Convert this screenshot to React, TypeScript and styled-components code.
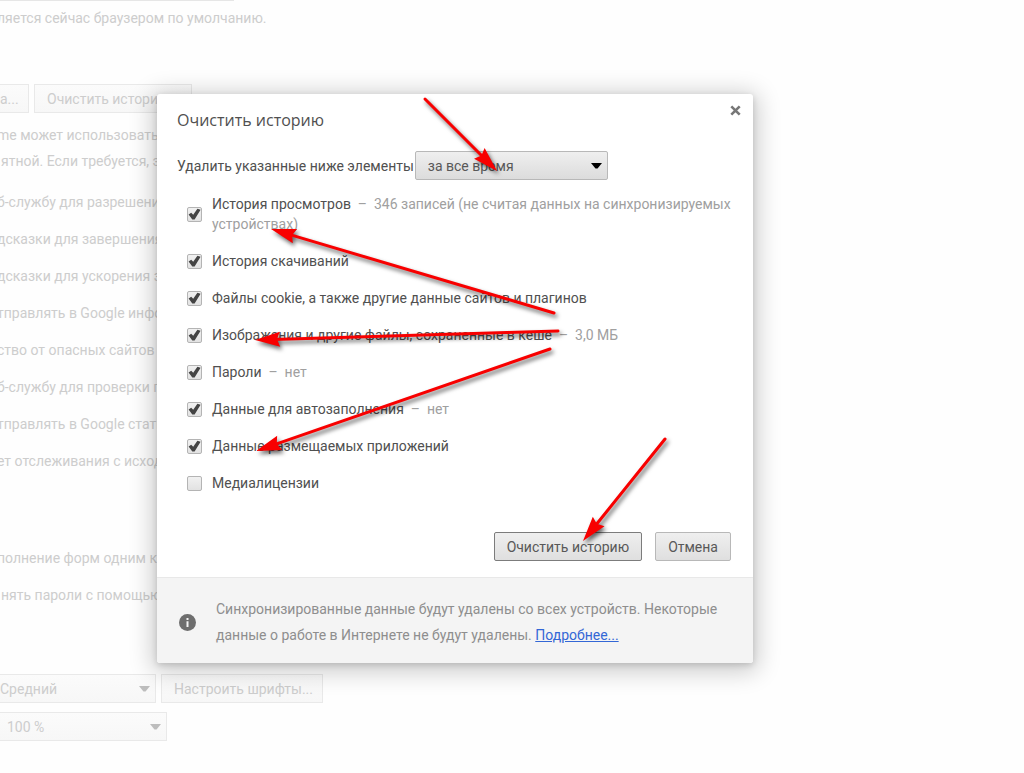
import React from "react";
import styled, { createGlobalStyle } from "styled-components";

const GlobalStyle = createGlobalStyle`
  *, *::before, *::after { box-sizing: border-box; }
  body {
    margin: 0;
    background: #fefefe;
    color: #505050;
    font-family: Roboto, "Noto Sans", sans-serif;
    font-size: 14px;
    line-height: 20px;
  }
  button, select, input { font: inherit; margin: 0; }
`;

const Page = styled.div`
  position: relative;
  min-height: 100vh;
  overflow: hidden;
`;

const Settings = styled.main`
  display: flex;
  flex-direction: column;
  color: #cdcdcd;
  white-space: nowrap;
`;

const Edge = styled.div`
  width: 234px;
  height: 1px;
  background: #e6e6e6;
`;

const Section = styled.section<{ $top: number; $gap: number }>`
  display: flex;
  flex-direction: column;
  gap: ${(p) => p.$gap}px;
  padding-top: ${(p) => p.$top}px;
`;

const Line = styled.p<{ $whole?: boolean }>`
  margin: 0 0 0 ${(p) => (p.$whole ? 1 : -3)}px;
`;

const Controls = styled.div`
  display: flex;
  gap: 5px;
`;

const FadedButton = styled.button<{ $w: number; $cut?: boolean }>`
  width: ${(p) => p.$w}px;
  height: 29px;
  padding: 0 12px 0 ${(p) => (p.$cut ? 0 : 12)}px;
  border: 1px solid #e9e9e9;
  border-left-width: ${(p) => (p.$cut ? 0 : 1)}px;
  background: linear-gradient(#fbfbfb, #f7f7f7);
  color: #cdcdcd;
  text-align: left;
`;

const SelectBox = styled.span<{ $w: number }>`
  display: inline-grid;
  align-items: center;
  width: ${(p) => p.$w}px;

  & > * { grid-area: 1 / 1; }
  & > svg { justify-self: end; margin-right: 6px; pointer-events: none; }
`;

const Select = styled.select<{ $faded?: boolean; $pad: number }>`
  appearance: none;
  width: 100%;
  height: 29px;
  padding: 0 20px 0 ${(p) => p.$pad}px;
  border: 1px solid ${(p) => (p.$faded ? "#e9e9e9" : "#b8b8b8")};
  border-left-width: ${(p) => (p.$faded ? 0 : 1)}px;
  border-radius: ${(p) => (p.$faded ? 0 : 2)}px;
  background: ${(p) => (p.$faded ? "linear-gradient(#fbfbfb, #f7f7f7)" : "linear-gradient(#efefef, #dcdcdc)")};
  color: ${(p) => (p.$faded ? "#cdcdcd" : "#585858")};
`;

const Overlay = styled.div`
  position: absolute;
  inset: 0;
  padding: 94px 20px 20px 157px;
`;

const Dialog = styled.div`
  position: relative;
  width: 100%;
  max-width: 596px;
  border-radius: 3px;
  background: #fff;
  box-shadow: 0 4px 23px 5px rgba(0, 0, 0, 0.2), 0 2px 6px rgba(0, 0, 0, 0.15);
`;

const Header = styled.header`
  display: flex;
  justify-content: space-between;
  align-items: flex-start;
  padding: 10px 11px 0 20px;
`;

const Title = styled.h1`
  margin: 4px 0 0;
  font-family: "Open Sans", "Noto Sans", sans-serif;
  font-size: 16px;
  line-height: 24px;
  font-weight: 400;
`;

const CloseButton = styled.button`
  display: flex;
  padding: 1px;
  border: 0;
  background: none;
`;

const Period = styled.div`
  display: flex;
  align-items: center;
  gap: 1px;
  padding: 19px 20px 0;

  label { white-space: nowrap; }
`;

const Options = styled.ul`
  display: flex;
  flex-direction: column;
  gap: 17px;
  margin: 0;
  padding: 14px 20px 0 30px;
  list-style: none;
`;

const Option = styled.label`
  display: flex;
  align-items: center;
  gap: 10px;
`;

const CheckBox = styled.span`
  display: grid;
  flex: none;
  place-items: center;

  & > * { grid-area: 1 / 1; }
  & > svg { pointer-events: none; }
`;

const CheckInput = styled.input`
  appearance: none;
  width: 15px;
  height: 15px;
  border: 1px solid #b4b4b4;
  border-radius: 2px;
  background: linear-gradient(#f1f1f1, #e2e2e2);
`;

const Muted = styled.span`
  color: #a0a0a0;
`;

const Actions = styled.div`
  display: flex;
  justify-content: flex-end;
  gap: 13px;
  padding: 39px 22px 16px;
`;

const ActionButton = styled.button<{ $primary?: boolean }>`
  height: 29px;
  padding: 0 12px;
  border: 1px solid ${(p) => (p.$primary ? "#7c7c7c" : "#b8b8b8")};
  border-radius: 2px;
  background: linear-gradient(#efefef, #dfdfdf);
  color: #585858;
`;

const Notice = styled.footer`
  display: flex;
  align-items: center;
  gap: 20px;
  padding: 18px 22px 15px;
  border-top: 1px solid #e8e8e8;
  border-radius: 0 0 3px 3px;
  background: #f4f4f4;
  color: #8e8e8e;
  line-height: 26px;

  p { margin: 0; }
  svg { flex: none; }
`;

const Link = styled.a`
  color: #3367d6;
`;

const ArrowLayer = styled.svg`
  position: absolute;
  top: 0;
  left: 0;
  width: 100%;
  height: 100%;
  overflow: visible;
  pointer-events: none;
  filter: drop-shadow(2px 3px 2px rgba(0, 0, 0, 0.6));
`;

const options = [
  { text: "История просмотров", note: "346 записей (не считая данных на синхронизируемых устройствах)", checked: true },
  { text: "История скачиваний", checked: true },
  { text: "Файлы cookie, а также другие данные сайтов и плагинов", checked: true },
  { text: "Изображения и другие файлы, сохраненные в кеше", note: "3,0 МБ", checked: true },
  { text: "Пароли", note: "нет", checked: true },
  { text: "Данные для автозаполнения", note: "нет", checked: true },
  { text: "Данные размещаемых приложений", checked: true },
  { text: "Медиалицензии", checked: false },
];

const arrows = [
  { from: [268, 5], to: [340, 77] },
  { from: [397, 219], to: [114, 135] },
  { from: [401, 237], to: [98, 246] },
  { from: [393, 255], to: [99, 357] },
  { from: [508, 345], to: [426, 447] },
];

function Arrow({ from, to }: { from: number[]; to: number[] }) {
  const dx = to[0] - from[0];
  const dy = to[1] - from[1];
  const length = Math.hypot(dx, dy);
  const angle = (Math.atan2(dy, dx) * 180) / Math.PI;
  return (
    <g transform={`translate(${to[0]} ${to[1]}) rotate(${angle})`}>
      <path d={`M${-length} 0H-18`} stroke="#f80000" strokeWidth="3" strokeLinecap="round" />
      <path d="M0 0L-25 -7.5L-22 0L-25 7.5Z" fill="#f80000" />
    </g>
  );
}

function Caret({ color }: { color: string }) {
  return (
    <svg width="11" height="6" viewBox="0 0 11 6" aria-hidden="true">
      <path d="M0 0H11L6.5 5.5H4.5Z" fill={color} />
    </svg>
  );
}

function CheckMark() {
  return (
    <svg width="15" height="15" viewBox="0 0 15 15" aria-hidden="true">
      <path d="M1.6 7.6L4.2 5.8L6.2 7.8L10.4 1.8L13.6 2.8L7.6 12.6H5.3Z" fill="#444" />
    </svg>
  );
}

export default function App() {
  return (
    <Page>
      <GlobalStyle />
      <Settings>
        <Edge />
        <Section $top={7} $gap={0}>
          <Line>ляется сейчас браузером по умолчанию.</Line>
        </Section>
        <Section $top={56} $gap={0}>
          <Controls>
            <FadedButton $w={29} $cut>а...</FadedButton>
            <FadedButton $w={158}>Очистить историю</FadedButton>
          </Controls>
        </Section>
        <Section $top={12} $gap={6}>
          <Line>me может использовать</Line>
          <Line $whole>ятной. Если требуется, э</Line>
        </Section>
        <Section $top={21} $gap={17}>
          <Line>б-службу для разрешени</Line>
          <Line>дсказки для завершения</Line>
          <Line>дсказки для ускорения з</Line>
          <Line>тправлять в Google инфо</Line>
          <Line>ство от опасных сайтов</Line>
          <Line>б-службу для проверки п</Line>
          <Line>тправлять в Google стати</Line>
          <Line>ет отслеживания с исход</Line>
        </Section>
        <Section $top={77} $gap={17}>
          <Line>полнение форм одним к</Line>
          <Line $whole>нять пароли с помощью</Line>
        </Section>
        <Section $top={69} $gap={9}>
          <Controls>
            <SelectBox $w={156}>
              <Select $faded $pad={0} aria-label="Размер шрифта">
                <option>Средний</option>
              </Select>
              <Caret color="#bdbdbd" />
            </SelectBox>
            <FadedButton $w={162}>Настроить шрифты...</FadedButton>
          </Controls>
          <Controls>
            <SelectBox $w={167}>
              <Select $faded $pad={7} aria-label="Масштаб страницы">
                <option>100 %</option>
              </Select>
              <Caret color="#bdbdbd" />
            </SelectBox>
          </Controls>
        </Section>
      </Settings>

      <Overlay>
        <Dialog role="dialog" aria-labelledby="dialog-title">
          <Header>
            <Title id="dialog-title">Очистить историю</Title>
            <CloseButton aria-label="Закрыть">
              <svg width="11" height="11" viewBox="0 0 11 11" aria-hidden="true">
                <path d="M1.3 1.3L9.7 9.7M9.7 1.3L1.3 9.7" stroke="#777" strokeWidth="2.6" />
              </svg>
            </CloseButton>
          </Header>
          <Period>
            <label htmlFor="period">Удалить указанные ниже элементы</label>
            <SelectBox $w={193}>
              <Select id="period" $pad={12}>
                <option>за все время</option>
              </Select>
              <Caret color="#000" />
            </SelectBox>
          </Period>
          <Options>
            {options.map((o) => (
              <li key={o.text}>
                <Option>
                  <CheckBox>
                    <CheckInput type="checkbox" defaultChecked={o.checked} />
                    {o.checked && <CheckMark />}
                  </CheckBox>
                  <span>
                    {o.text}
                    {o.note && <Muted>{"\u00a0 –\u00a0 "}{o.note}</Muted>}
                  </span>
                </Option>
              </li>
            ))}
          </Options>
          <Actions>
            <ActionButton $primary>Очистить историю</ActionButton>
            <ActionButton>Отмена</ActionButton>
          </Actions>
          <Notice>
            <svg width="17" height="17" viewBox="0 0 17 17" aria-hidden="true">
              <circle cx="8.5" cy="8.5" r="8.5" fill="#6e6e6e" />
              <path d="M7.5 4H9.5V6H7.5ZM7.5 7.3H9.5V13H7.5Z" fill="#f4f4f4" />
            </svg>
            <p>
              Синхронизированные данные будут удалены со всех устройств. Некоторые данные о работе в
              Интернете не будут удалены. <Link href="#more">Подробнее...</Link>
            </p>
          </Notice>
          <ArrowLayer aria-hidden="true">
            {arrows.map((a, i) => (
              <Arrow key={i} from={a.from} to={a.to} />
            ))}
          </ArrowLayer>
        </Dialog>
      </Overlay>
    </Page>
  );
}
